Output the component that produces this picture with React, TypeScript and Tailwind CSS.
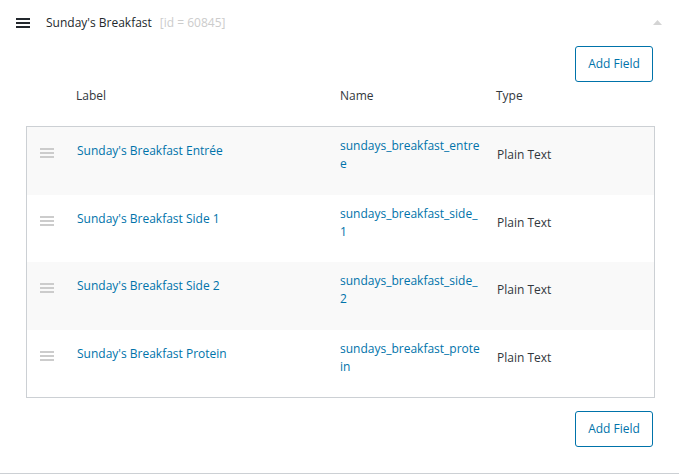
const fields = [
  { label: "Sunday's Breakfast Entrée", name: 'sundays_breakfast_entree', type: 'Plain Text' },
  { label: "Sunday's Breakfast Side 1", name: 'sundays_breakfast_side_1', type: 'Plain Text' },
  { label: "Sunday's Breakfast Side 2", name: 'sundays_breakfast_side_2', type: 'Plain Text' },
  { label: "Sunday's Breakfast Protein", name: 'sundays_breakfast_protein', type: 'Plain Text' },
];

function MenuIcon({ color, className }: { color: string; className?: string }) {
  return (
    <svg width="14" height="10" viewBox="0 0 14 10" className={className}>
      <rect x="0" y="0" width="14" height="2" fill={color} />
      <rect x="0" y="4" width="14" height="2" fill={color} />
      <rect x="0" y="8" width="14" height="2" fill={color} />
    </svg>
  );
}

function AddFieldButton() {
  return (
    <button className="h-[36px] w-[78px] rounded-[3px] border border-[#0073aa] bg-white text-[12px] text-[#0073aa]">
      Add Field
    </button>
  );
}

export default function App() {
  return (
    <div
      className="flex h-[474px] w-full flex-col border-b border-[#ccd0d4] bg-white text-[12px] leading-[18px]"
      style={{ fontFamily: '"Open Sans", "Noto Sans", sans-serif' }}
    >
      {/* Title bar */}
      <div className="flex h-[46px] items-center pl-[16px] pr-[17px]">
        <MenuIcon color="#23282d" className="-mt-[1px]" />
        <span className="ml-[16px] text-[#23282d]">Sunday's Breakfast</span>
        <span className="ml-[8px] text-[#cccccc]">[id = 60845]</span>
        <div className="flex-1" />
        <svg width="9" height="5" viewBox="0 0 9 5" className="-mt-[1px]">
          <polygon points="4.5,0 9,5 0,5" fill="#d4d4d4" />
        </svg>
      </div>

      <div className="flex justify-end pr-[26px]">
        <AddFieldButton />
      </div>

      {/* Column headings */}
      <div className="mt-[5px] flex pl-[76px] text-[#32373c]">
        <div className="w-[264px]">Label</div>
        <div className="w-[156px]">Name</div>
        <div>Type</div>
      </div>

      {/* Fields table */}
      <div className="ml-[26px] mr-[24px] mt-[21px] border border-[#ccd0d4]">
        {fields.map((f, i) => (
          <div
            key={f.name}
            className={`flex items-start ${i % 2 === 0 ? 'h-[68px] bg-[#f9f9f9]' : 'h-[67px] bg-white'}`}
          >
            <div className="w-[50px] pl-[13px] pt-[21px]">
              <MenuIcon color="#cccccc" className="block" />
            </div>
            <div className="w-[263px] pt-[15px] text-[#0073aa]">{f.label}</div>
            <div className="w-[157px] pt-[10px]">
              <div className="w-[141px] break-all text-[#0073aa]">{f.name}</div>
            </div>
            <div className="pt-[19px] text-[#32373c]">{f.type}</div>
          </div>
        ))}
      </div>

      <div className="mt-[13px] flex justify-end pr-[26px]">
        <AddFieldButton />
      </div>
    </div>
  );
}
